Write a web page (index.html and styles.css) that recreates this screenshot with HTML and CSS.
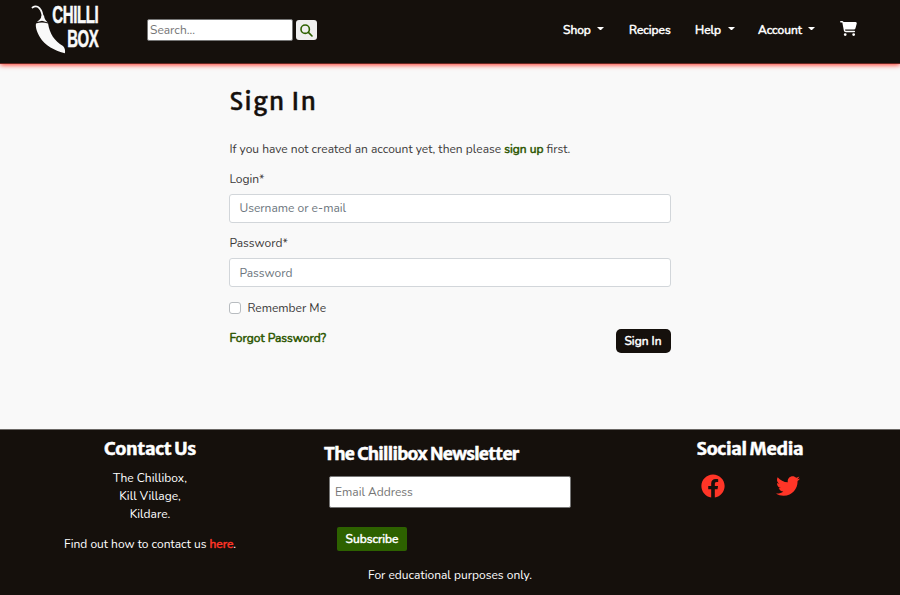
FILE: index.html
```html
<!DOCTYPE html>
<html lang="en">
<head>
<meta charset="utf-8">
<title>Chillibox - Sign In</title>
<link rel="stylesheet" href="styles.css">
</head>
<body>
<header class="header">
  <a class="logo" aria-label="Chilli Box"><svg width="90" height="60" viewBox="0 0 90 60" fill="#f9f9f9">
    <path d="M2.5 6.5C7.5 3.2 12.3 7.5 13.1 18.8" fill="none" stroke="#f9f9f9" stroke-width="1.8" stroke-linecap="round"/>
    <path d="M11.4 14.5C11.3 17.8 9.3 19.1 7 20.9L12.1 19.8L17.7 21.5C15.3 19.2 14.3 17.5 14 14.5Z"/>
    <path d="M6 22.6Q11.8 20.6 18.1 22.6C19.6 32.7 24.4 40 33 45.1C34.8 46.8 35.5 49.5 34.9 52.3C25.4 50 14.4 44.5 9.8 36C7.2 31.5 5.2 26.5 6 22.6Z"/>
    <text class="logo-text" transform="translate(22.2 21.8) scale(.655 1)">CHILLI</text>
    <text class="logo-text" transform="translate(37.2 46) scale(.65 1)">BOX</text>
  </svg></a>
  <form class="search">
    <input type="text" placeholder="Search...">
    <button type="button" aria-label="Search"><svg width="13" height="13" viewBox="0 0 13 13" fill="none" stroke="#2d6100" stroke-width="1.6" stroke-linecap="round"><circle cx="5.2" cy="5.2" r="4.2"/><path d="M8.4 8.4L12 12"/></svg></button>
  </form>
  <nav class="nav">
    <a class="shop">Shop<i class="caret"></i></a>
    <a class="recipes">Recipes</a>
    <a class="help">Help<i class="caret"></i></a>
    <a class="account">Account<i class="caret"></i></a>
    <a class="cart" aria-label="Cart"><svg width="17" height="15" viewBox="0 0 576 512" fill="#fff"><path d="M0 24C0 10.7 10.7 0 24 0H69.5c22 0 41.5 12.8 50.6 32h411c26.3 0 45.5 25 38.6 50.4l-41 152.3c-8.5 31.4-37 53.3-69.5 53.3H170.7l5.4 28.5c2.2 11.3 12.1 19.5 23.6 19.5H488c13.3 0 24 10.7 24 24s-10.7 24-24 24H199.7c-34.6 0-64.3-24.6-70.7-58.5L77.4 54.5c-.7-3.8-4-6.5-7.9-6.5H24C10.7 48 0 37.3 0 24zM128 464a48 48 0 1 1 96 0 48 48 0 1 1 -96 0zm336-48a48 48 0 1 1 0 96 48 48 0 1 1 0-96z"/></svg></a>
  </nav>
</header>
<main class="main">
  <h1>Sign In</h1>
  <p class="intro">If you have not created an account yet, then please <a>sign up</a> first.</p>
  <form class="login">
    <label for="login">Login*</label>
    <input class="field" id="login" type="text" placeholder="Username or e-mail">
    <label for="password">Password*</label>
    <input class="field" id="password" type="password" placeholder="Password">
    <label class="remember"><input type="checkbox"><span>Remember Me</span></label>
    <div class="actions"><a>Forgot Password?</a><button type="button">Sign In</button></div>
  </form>
</main>
<footer class="footer">
  <div class="columns">
    <section class="contact">
      <h2>Contact Us</h2>
      <address>The Chillibox,<br>Kill Village,<br>Kildare.</address>
      <p>Find out how to contact us <a>here</a>.</p>
    </section>
    <section class="newsletter">
      <h2>The Chillibox Newsletter</h2>
      <input type="email" placeholder="Email Address">
      <button type="button">Subscribe</button>
    </section>
    <section class="social">
      <h2>Social Media</h2>
      <div class="icons">
        <svg width="24" height="24" viewBox="0 0 512 512" fill="#ff3527"><path d="M504 256C504 119 393 8 256 8S8 119 8 256c0 123.78 90.69 226.38 209.25 245V327.69h-63V256h63v-54.64c0-62.15 37-96.48 93.67-96.48 27.14 0 55.52 4.84 55.52 4.84v61h-31.28c-30.8 0-40.41 19.12-40.41 38.73V256h68.78l-11 71.69h-57.78V501C413.31 482.38 504 379.78 504 256z"/></svg>
        <svg width="24" height="24" viewBox="0 0 512 512" fill="#ff3527"><path d="M459.37 151.716c.325 4.548.325 9.097.325 13.645 0 138.72-105.583 298.558-298.558 298.558-59.452 0-114.68-17.219-161.137-47.106 8.447.974 16.568 1.299 25.34 1.299 49.055 0 94.213-16.568 130.274-44.832-46.132-.975-84.792-31.188-98.112-72.772 6.498.974 12.995 1.624 19.818 1.624 9.421 0 18.843-1.3 27.614-3.573-48.081-9.747-84.143-51.98-84.143-102.985v-1.299c13.969 7.797 30.214 12.67 47.431 13.319-28.264-18.843-46.781-51.005-46.781-87.391 0-19.492 5.197-37.36 14.294-52.954 51.655 63.675 129.3 105.258 216.365 109.807-1.624-7.797-2.599-15.918-2.599-24.04 0-57.828 46.782-104.934 104.934-104.934 30.213 0 57.502 12.67 76.67 33.137 23.715-4.548 46.456-13.32 66.599-25.34-7.798 24.366-24.366 44.833-46.132 57.827 21.117-2.273 41.584-8.122 60.426-16.243-14.292 20.791-32.161 39.308-52.628 54.253z"/></svg>
      </div>
    </section>
  </div>
  <p class="note">For educational purposes only.</p>
</footer>
</body>
</html>
```
FILE: styles.css
```css
* { box-sizing: border-box; }
body {
  margin: 0;
  height: 595px;
  display: flex;
  flex-direction: column;
  overflow: hidden;
  background: #f9f9f9;
  color: #3c3a3a;
  font: 12px/18px Nunito, Lato, sans-serif;
}
h1, h2, p { margin: 0; }
input, button { font: inherit; margin: 0; }
input::placeholder { color: #757575; opacity: 1; }
svg { display: block; }

.header {
  height: 64px;
  flex: none;
  display: flex;
  align-items: flex-start;
  padding-left: 30px;
  background: #15100c;
  border-bottom: 1px solid #6b2520;
  box-shadow: 0 1px 5px #ff3527;
}
.logo { width: 117px; padding-top: 1px; }
.logo-text { font: bold 23px "Liberation Sans", sans-serif; stroke: #f9f9f9; stroke-width: .5px; letter-spacing: -.6px; }
.search { display: flex; align-items: center; gap: 3px; padding-top: 19px; }
.search input {
  width: 146px;
  height: 22px;
  padding: 0 2px;
  border: 1px solid #767676;
  border-radius: 2px;
  background: #fff;
}
.search button {
  width: 21px;
  height: 20px;
  padding: 0 0 0 4px;
  border: 0;
  border-radius: 3px;
  background: #efefef;
}
.nav { display: flex; margin-left: 246px; padding-top: 21px; color: #fff; -webkit-text-stroke: .5px; }
.nav a { display: flex; }
.shop { width: 66px; }
.recipes { width: 66px; }
.help { width: 63px; }
.account { width: 82px; }
.caret { margin: 6px 0 0 6.5px; width: 7px; height: 4px; border: solid transparent; border-width: 3.6px 3.6px 0; border-top-color: #fff; }

.main { width: 442px; height: 365px; flex: none; margin: 0 auto; padding-top: 21px; }
h1 { color: #15100c; font: 500 24px/34px "Merriweather Sans", "Noto Sans", sans-serif; letter-spacing: 1.5px; -webkit-text-stroke: .4px; padding-left: .5px; }
.intro { margin-top: 21px; }
.intro, .login label { padding-left: .4px; }
.main a { color: #2c5600; -webkit-text-stroke: .5px; }
.login { display: flex; flex-direction: column; margin-top: 12px; }
.field {
  height: 29px;
  margin: 6px 0 11px;
  padding: 0 9.4px 1px;
  border: 1px solid #d2d6da;
  border-radius: 3px;
  background: #fff;
}
.field::placeholder { color: #6c757d; }
#password { margin-bottom: 12px; padding-bottom: 0; }
.remember { display: flex; align-items: center; gap: 6px; }
.remember input {
  appearance: none;
  width: 12px;
  height: 12px;
  border: 1px solid #b8bcc0;
  border-radius: 3px;
  background: #fff;
}
.actions { display: flex; justify-content: space-between; margin-top: 12px; padding-left: .5px; }
.actions button {
  width: 55px;
  height: 24px;
  padding: 0 1px 0 0;
  border: 0;
  border-radius: 5px;
  background: #15100c;
  color: #fff;
  -webkit-text-stroke: .5px;
}

.footer { flex: 1; border-top: 1px solid #6c6966; background: #15100c; color: #fff; }
.columns { display: grid; grid-template-columns: 300px 300px 300px; height: 136px; }
h2 { font: 600 18px/24px "Merriweather Sans", "Noto Sans", sans-serif; letter-spacing: -0.35px; -webkit-text-stroke: .5px; }
.contact { padding-top: 7px; text-align: center; }
.contact address { margin-top: 8px; font-style: normal; }
.contact p { margin-top: 12px; }
.contact a { color: #ff3527; -webkit-text-stroke: .5px; }
.newsletter { display: flex; flex-direction: column; align-items: flex-start; padding: 12px 0 0 24px; }
.newsletter h2 { font-size: 17.5px; letter-spacing: -0.72px; word-spacing: .8px; }
.newsletter input {
  width: 242px;
  height: 32px;
  margin: 10px 0 19px 5px;
  padding: 0 5px;
  border: 1px solid #767676;
  border-radius: 2px;
}
.newsletter button {
  width: 70px;
  height: 24px;
  margin-left: 13px;
  padding: 0;
  border: 0;
  border-radius: 2px;
  background: #2d6100;
  color: #fff;
  -webkit-text-stroke: .5px;
}
.social { padding-top: 7px; text-align: center; }
.icons { display: flex; justify-content: center; gap: 51px; margin-top: 13px; }
.note { text-align: center; }
```
